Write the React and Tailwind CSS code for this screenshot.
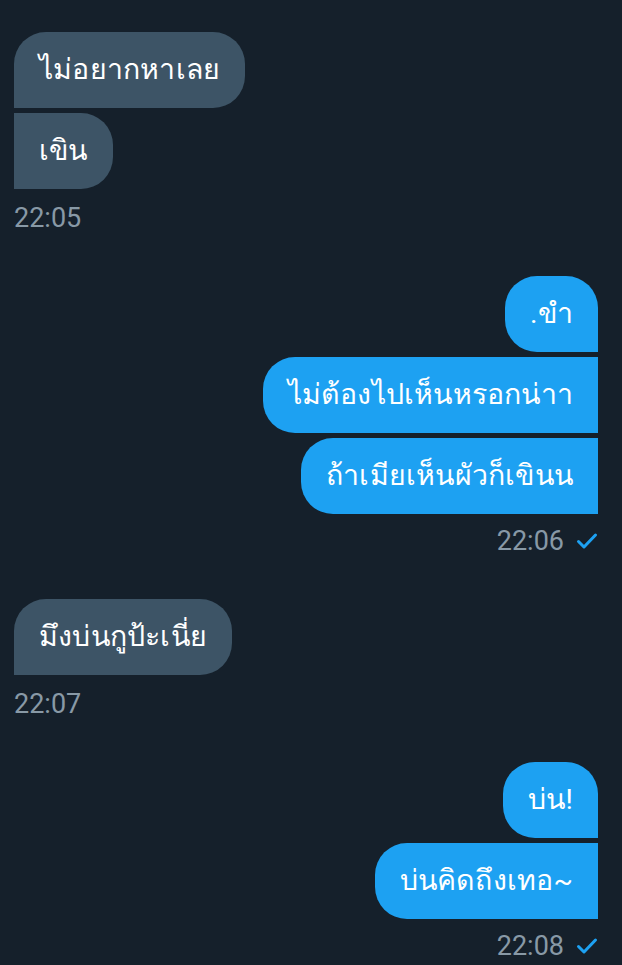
const groups = [
  { side: 'in', time: '22:05', msgs: ['ไม่อยากหาเลย', 'เขิน'] },
  { side: 'out', time: '22:06', msgs: ['.ขำ', 'ไม่ต้องไปเห็นหรอกน่าา', 'ถ้าเมียเห็นผัวก็เขินน'] },
  { side: 'in', time: '22:07', msgs: ['มึงบ่นกูป้ะเนี่ย'] },
  { side: 'out', time: '22:08', msgs: ['บ่น!', 'บ่นคิดถึงเทอ~'] },
];

function Bubble({ text, side, first }) {
  const shape =
    side === 'in'
      ? first
        ? 'rounded-tl-[32px] rounded-tr-[32px] rounded-br-[32px] bg-[#3d5466]'
        : 'rounded-tr-[32px] rounded-br-[32px] bg-[#3d5466]'
      : first
        ? 'rounded-tl-[32px] rounded-tr-[32px] rounded-bl-[32px] bg-[#1da1f2]'
        : 'rounded-tl-[32px] rounded-bl-[32px] bg-[#1da1f2]';
  return (
    <div className={`${shape} px-[25px] py-[20px] text-[28.5px] leading-[36px] tracking-[0.2px] text-white whitespace-nowrap`}>
      {text}
    </div>
  );
}

function Tick() {
  return (
    <svg width="22" height="18" viewBox="0 0 22 18" fill="none" className="text-[#1da1f2]">
      <path d="M2.5 9.5l5.5 5.5L19.5 3" stroke="currentColor" strokeWidth="3" strokeLinecap="round" strokeLinejoin="round" />
    </svg>
  );
}

export default function App() {
  return (
    <div
      className="min-h-[965px] w-[622px] bg-[#15202b] pt-[32px] pl-[14px] pr-[24px] flex flex-col gap-[43px]"
      style={{ fontFamily: 'Roboto, "Noto Sans", sans-serif' }}
    >
      {groups.map((g, i) => (
        <div key={i} className={`flex flex-col ${g.side === 'in' ? 'items-start' : 'items-end'}`}>
          <div className={`flex flex-col gap-[5px] ${g.side === 'in' ? 'items-start' : 'items-end'}`}>
            {g.msgs.map((m, j) => (
              <Bubble key={j} text={m} side={g.side} first={j === 0} />
            ))}
          </div>
          {g.side === 'in' ? (
            <div className="mt-[14px] text-[27px] leading-[30px] text-[#8899a6]">{g.time}</div>
          ) : (
            <div className="mt-[12px] flex items-center gap-[12px] text-[27px] leading-[30px] text-[#8899a6]">
              <span>{g.time}</span>
              <Tick />
            </div>
          )}
        </div>
      ))}
    </div>
  );
}
